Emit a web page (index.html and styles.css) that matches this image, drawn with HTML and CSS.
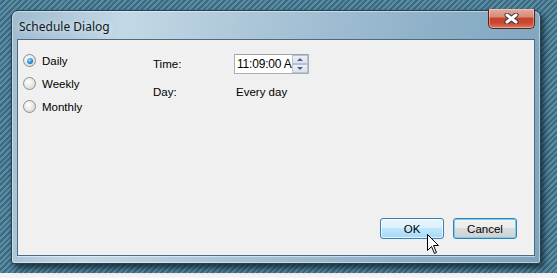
FILE: index.html
```html
<!DOCTYPE html>
<html lang="en">
<head>
  <meta charset="UTF-8" />
  <title>Schedule Dialog</title>
  <link rel="stylesheet" href="styles.css">
</head>
<body>
  <div class="desktop">
    <div class="window">
      <div class="titlebar">
        <span class="title">Schedule Dialog</span>
        <button class="close" aria-label="Close">
          <svg width="15" height="11" viewBox="0 0 15 11">
            <path d="M3 2 L12 9 M12 2 L3 9" stroke="#3a3a44" stroke-width="5" stroke-linecap="round" />
            <path d="M3 2 L12 9 M12 2 L3 9" stroke="#ffffff" stroke-width="3" stroke-linecap="round" />
          </svg>
        </button>
      </div>

      <div class="client">
        <div class="content">
          <div class="options">
            <label class="radio"><span class="dot checked"></span>Daily</label>
            <label class="radio"><span class="dot"></span>Weekly</label>
            <label class="radio"><span class="dot"></span>Monthly</label>
          </div>

          <div class="fields">
            <span class="field-label">Time:</span>
            <div class="timebox">
              <span class="time-text">11:09:00 A</span>
              <div class="spinner">
                <span class="spin up"></span>
                <span class="spin down"></span>
              </div>
            </div>
            <span class="field-label">Day:</span>
            <span class="field-value">Every day</span>
          </div>
        </div>

        <div class="actions">
          <button class="btn hover">OK</button>
          <button class="btn default">Cancel</button>
        </div>

        <svg class="cursor" width="13" height="21" viewBox="0 0 13 21">
          <path d="M0.5 0.5 L0.5 16.5 L4.5 12.5 L7.5 19.5 L9.5 18.5 L6.5 11.5 L11.5 11.5 Z" fill="#ffffff" stroke="#000000" stroke-width="1" stroke-linejoin="miter" />
        </svg>
      </div>
    </div>
  </div>
</body>
</html>
```

FILE: styles.css
```css
body {
  margin: 0;
  width: 557px;
  height: 278px;
  overflow: hidden;
  background: linear-gradient(#c9cfd3, #f4f4f4);
  font-family: "Liberation Sans", Arial, sans-serif;
  font-size: 11px;
  color: #000;
}

.desktop {
  height: 273px;
  padding: 10px 0 0 11px;
  box-sizing: border-box;
  background: repeating-linear-gradient(135deg, #5a8ca3 0px, #5a8ca3 2px, #3c6b81 2px, #3c6b81 4px);
}

.window {
  width: 530px;
  height: 254px;
  box-sizing: border-box;
  border: 1px solid #27404f;
  border-radius: 7px 7px 3px 3px;
  padding: 0 5px 7px 5px;
  display: flex;
  flex-direction: column;
  background: linear-gradient(100deg, #9ebbd0 0%, #c3d8e6 20%, #a9c4d7 45%, #8db0c8 75%, #7ea5bf 100%);
  box-shadow: 3px 4px 6px rgba(10, 25, 35, 0.75), inset 0 0 0 1px rgba(255, 255, 255, 0.45);
}

.titlebar {
  height: 28px;
  display: flex;
  align-items: flex-start;
}

.title {
  margin: 7px 0 0 2px;
  font-family: "Noto Sans", "Liberation Sans", sans-serif;
  font-size: 12px;
  color: #101820;
  text-shadow: 0 0 6px rgba(255, 255, 255, 0.9);
}

.close {
  margin-left: auto;
  margin-top: -2px;
  width: 47px;
  height: 20px;
  padding: 0;
  border: 1px solid #5b2419;
  border-top: none;
  border-radius: 0 0 5px 5px;
  display: flex;
  align-items: center;
  justify-content: center;
  background: linear-gradient(#e4ab9c 0%, #d88c79 40%, #c5432a 50%, #c94a30 75%, #dc7a64 100%);
  box-shadow: inset 0 0 0 1px rgba(255, 220, 210, 0.45);
}

.client {
  flex: 1;
  position: relative;
  display: flex;
  flex-direction: column;
  justify-content: space-between;
  background: #f0f0f0;
  border: 1px solid #4d6b80;
  box-shadow: 0 1px 0 rgba(255, 255, 255, 0.5);
}

.content {
  display: flex;
  padding: 9px 0 0 5px;
}

.options {
  width: 130px;
  display: flex;
  flex-direction: column;
}

.radio {
  height: 23px;
  display: flex;
  align-items: center;
  gap: 6px;
  font-size: 11.5px;
  color: #000;
}

.dot {
  width: 11px;
  height: 11px;
  border-radius: 50%;
  border: 1px solid #8e8f8f;
  background: radial-gradient(circle at 40% 35%, #ffffff 0%, #eaeaea 45%, #cfcfcf 100%);
  display: flex;
  align-items: center;
  justify-content: center;
}

.dot.checked::after {
  content: "";
  width: 6px;
  height: 6px;
  border-radius: 50%;
  background: radial-gradient(circle at 40% 35%, #9fdcff 0%, #2a8ad4 55%, #0b4c8a 100%);
}

.fields {
  margin-top: 5px;
  display: grid;
  grid-template-columns: 81px auto;
  grid-auto-rows: min-content;
  row-gap: 12px;
  align-items: center;
  font-size: 11.5px;
}

.timebox {
  width: 75px;
  height: 20px;
  box-sizing: border-box;
  border: 1px solid #abadb3;
  border-top-color: #a0a2a8;
  background: #fff;
  display: flex;
  align-items: center;
}

.time-text {
  flex: 1;
  white-space: nowrap;
  font-size: 12px;
  letter-spacing: -0.2px;
  padding-left: 2px;
}

.spinner {
  width: 16px;
  height: 18px;
  display: flex;
  flex-direction: column;
}

.spin {
  flex: 1;
  border: 1px solid #b7c2d0;
  background: linear-gradient(#eef2f7, #d9e1ea);
  display: flex;
  align-items: center;
  justify-content: center;
}

.spin::after {
  content: "";
  border-left: 3px solid transparent;
  border-right: 3px solid transparent;
}

.spin.up::after {
  border-bottom: 3px solid #4d6185;
}

.spin.down::after {
  border-top: 3px solid #4d6185;
}

.field-value {
  padding-left: 2px;
}

.actions {
  display: flex;
  justify-content: flex-end;
  gap: 9px;
  padding: 0 17px 16px 0;
}

.btn {
  width: 64px;
  height: 21px;
  padding: 0;
  border-radius: 3px;
  font-family: "Liberation Sans", Arial, sans-serif;
  font-size: 11.5px;
  color: #000;
}

.btn.hover {
  border: 1px solid #3c7fb1;
  background: linear-gradient(#eaf6fd 0%, #d9f0fc 50%, #bee6fd 50%, #a7d9f5 100%);
  box-shadow: inset 0 0 0 1px rgba(255, 255, 255, 0.7);
}

.btn.default {
  border: 1px solid #3c7fb1;
  background: linear-gradient(#f2f2f2 0%, #ebebeb 50%, #dddddd 50%, #cfcfcf 100%);
  box-shadow: inset 0 0 0 1px #6fd1f6;
}

.cursor {
  position: absolute;
  left: 409px;
  top: 194px;
}
```
